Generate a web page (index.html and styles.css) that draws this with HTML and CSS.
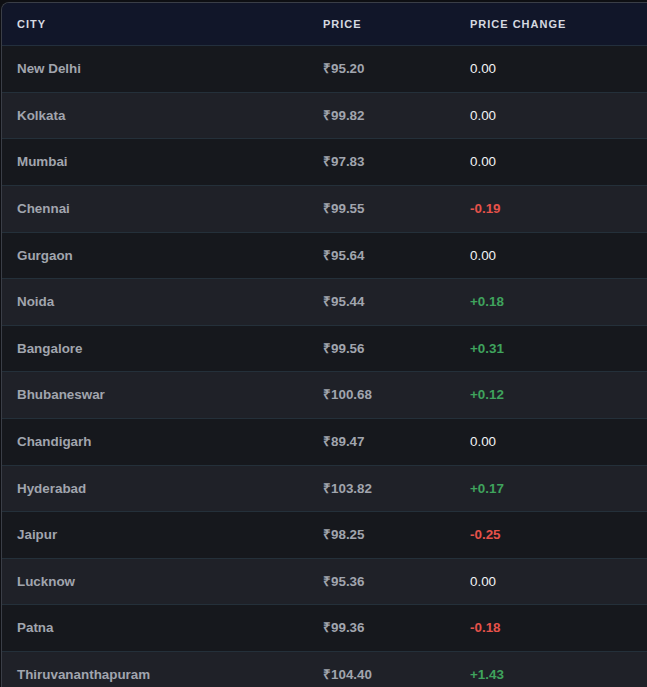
FILE: index.html
```html
<!DOCTYPE html>
<html lang="en">
<head>
<meta charset="utf-8">
<title>Petrol Prices</title>
<link rel="stylesheet" href="styles.css">
</head>
<body>
<div class="table-wrap">
  <table class="prices">
    <thead>
      <tr>
        <th class="col-city">City</th>
        <th class="col-price">Price</th>
        <th class="col-change">Price Change</th>
      </tr>
    </thead>
    <tbody>
      <tr><td class="city">New Delhi</td><td class="price">₹95.20</td><td class="chg">0.00</td></tr>
      <tr><td class="city">Kolkata</td><td class="price">₹99.82</td><td class="chg">0.00</td></tr>
      <tr><td class="city">Mumbai</td><td class="price">₹97.83</td><td class="chg">0.00</td></tr>
      <tr><td class="city">Chennai</td><td class="price">₹99.55</td><td class="chg down">-0.19</td></tr>
      <tr><td class="city">Gurgaon</td><td class="price">₹95.64</td><td class="chg">0.00</td></tr>
      <tr><td class="city">Noida</td><td class="price">₹95.44</td><td class="chg up">+0.18</td></tr>
      <tr><td class="city">Bangalore</td><td class="price">₹99.56</td><td class="chg up">+0.31</td></tr>
      <tr><td class="city">Bhubaneswar</td><td class="price">₹100.68</td><td class="chg up">+0.12</td></tr>
      <tr><td class="city">Chandigarh</td><td class="price">₹89.47</td><td class="chg">0.00</td></tr>
      <tr><td class="city">Hyderabad</td><td class="price">₹103.82</td><td class="chg up">+0.17</td></tr>
      <tr><td class="city">Jaipur</td><td class="price">₹98.25</td><td class="chg down">-0.25</td></tr>
      <tr><td class="city">Lucknow</td><td class="price">₹95.36</td><td class="chg">0.00</td></tr>
      <tr><td class="city">Patna</td><td class="price">₹99.36</td><td class="chg down">-0.18</td></tr>
      <tr><td class="city">Thiruvananthapuram</td><td class="price">₹104.40</td><td class="chg up">+1.43</td></tr>
    </tbody>
  </table>
</div>
</body>
</html>
```
FILE: styles.css
```css
html, body {
  margin: 0;
  padding: 0;
  background: #0e0f13;
  overflow: hidden;
}
body {
  padding: 2px 0 0 1px;
  font-family: "Liberation Sans", Arial, Helvetica, sans-serif;
}
.table-wrap {
  border: 1px solid #3a3e47;
  border-right: 0;
  border-radius: 8px 0 0 0;
  overflow: hidden;
  background: #16181d;
}
.prices {
  width: 100%;
  border-collapse: collapse;
  table-layout: fixed;
}
.prices th {
  background: #111629;
  color: #d6d9e0;
  font-size: 11px;
  font-weight: 700;
  letter-spacing: 1px;
  text-transform: uppercase;
  text-align: left;
  line-height: 1.2;
  padding: 14.5px 15px 14.5px;
  border-bottom: 1px solid #232f3d;
}
.col-city { width: 276px; }
.col-price { width: 117px; }
.prices td {
  font-size: 13.4px;
  line-height: 15.6px;
  padding: 15px 15px;
  border-bottom: 1px solid #24303a;
  white-space: nowrap;
}
.prices tbody tr:nth-child(odd) td { background: #16181d; }
.prices tbody tr:nth-child(even) td { background: #1f2128; }
.city, .price {
  color: #a1a5ae;
  font-weight: 700;
}
.chg {
  color: #f2f3f5;
  font-weight: 400;
}
.chg.up {
  color: #3fa35d;
  font-weight: 700;
}
.chg.down {
  color: #e5524a;
  font-weight: 700;
}
```
